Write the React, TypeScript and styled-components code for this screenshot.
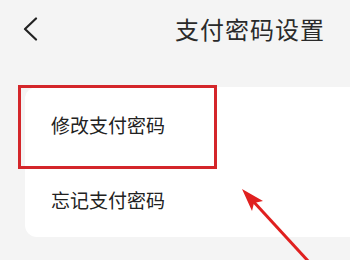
import styled, { createGlobalStyle } from "styled-components"

const GlobalStyle = createGlobalStyle`
  html, body {
    margin: 0;
    padding: 0;
    background: #f4f4f4;
  }
  body {
    font-family: "Noto Sans CJK SC", "Noto Sans", sans-serif;
    color: #222;
  }
`

const StyledPage = styled.div`
  position: relative;
  width: 350px;
  height: 260px;
  overflow: hidden;
  background: #f4f4f4;
`

const StyledHeader = styled.header`
  display: flex;
  height: 58px;
  padding: 0 25px 0 22px;
  align-items: center;
  justify-content: space-between;
`

const StyledBackButton = styled.button`
  display: flex;
  padding: 0;
  margin-top: 0;
  border: 0;
  background: none;
  color: #222;
`

const StyledTitle = styled.h1`
  margin: 0;
  font-size: 24px;
  font-weight: 400;
  letter-spacing: 1px;
  line-height: 1;
  color: #2a2a2a;
`

const StyledCard = styled.ul`
  list-style: none;
  margin: 29px -20px 0 25px;
  padding: 0;
  background: #fff;
  border-radius: 12px;
`

const StyledRow = styled.li`
  position: relative;
  display: flex;
  height: 75px;
  padding-left: 26px;
  align-items: center;
  font-size: 19px;
  color: #222;
`

const StyledHighlight = styled.span`
  position: absolute;
  left: -7px;
  top: -2px;
  width: 199px;
  height: 84px;
  box-sizing: border-box;
  border: 3px solid #d4262a;
  pointer-events: none;
`

const StyledArrow = styled.svg`
  position: absolute;
  left: 0;
  top: 0;
  pointer-events: none;
`

const BackIcon = () => (
  <svg width="16" height="24" viewBox="0 0 16 24" fill="none">
    <path d="M14 1.5 L3 12 L14 22.5" stroke="currentColor" strokeWidth="2.2" strokeLinecap="round" strokeLinejoin="round" />
  </svg>
)

export default function App() {
  return (
    <>
      <GlobalStyle />
      <StyledPage>
        <StyledHeader>
          <StyledBackButton aria-label="返回">
            <BackIcon />
          </StyledBackButton>
          <StyledTitle>支付密码设置</StyledTitle>
        </StyledHeader>

        <StyledCard>
          <StyledRow>
            修改支付密码
            <StyledHighlight />
          </StyledRow>
          <StyledRow>忘记支付密码</StyledRow>
        </StyledCard>

        <StyledArrow width="350" height="260" viewBox="0 0 350 260">
          <line x1="309" y1="262" x2="252" y2="200" stroke="#e0201f" strokeWidth="3" />
          <polygon points="242,189 263,201 254,203 252,211" fill="#e0201f" />
        </StyledArrow>
      </StyledPage>
    </>
  )
}
